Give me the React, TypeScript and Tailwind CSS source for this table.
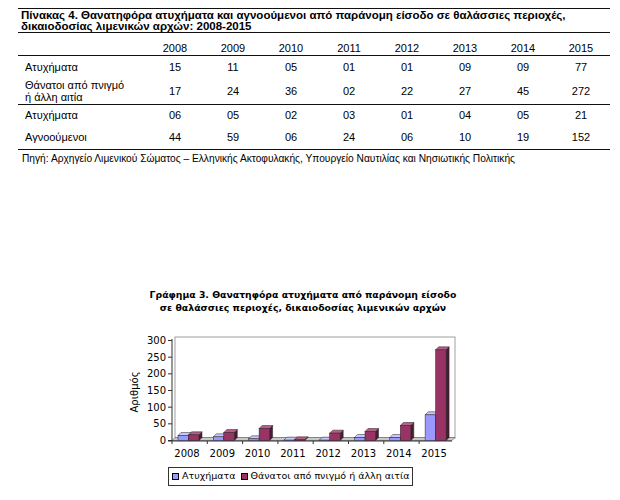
import React from "react";

const years = ["2008", "2009", "2010", "2011", "2012", "2013", "2014", "2015"];
const rows: { label: React.ReactNode; vals: string[]; h: string; border?: boolean }[] = [
  { label: "Ατυχήματα", vals: ["15", "11", "05", "01", "01", "09", "09", "77"], h: "h-[24px]" },
  {
    label: (
      <>
        Θάνατοι από πνιγμό
        <br />ή άλλη αιτία
      </>
    ),
    vals: ["17", "24", "36", "02", "22", "27", "45", "272"],
    h: "h-[25px]",
    border: true,
  },
  { label: "Ατυχήματα", vals: ["06", "05", "02", "03", "01", "04", "05", "21"], h: "h-[22px]" },
  { label: "Αγνοούμενοι", vals: ["44", "59", "06", "24", "06", "10", "19", "152"], h: "h-[23px]", border: true },
];

const blue = [15, 11, 5, 1, 1, 9, 9, 77];
const red = [17, 24, 36, 2, 22, 27, 45, 272];

function Bar({ x, v, w, front, top, side }: { x: number; v: number; w: number; front: string; top: string; side: string }) {
  const y0 = 438.5;
  const h = v / 3;
  const y = y0 - h;
  const d = 3;
  return (
    <g stroke="#222" strokeWidth={0.5}>
      <polygon points={`${x + w},${y} ${x + w + d},${y - d} ${x + w + d},${y0 - d} ${x + w},${y0}`} fill={side} />
      <polygon points={`${x},${y} ${x + d},${y - d} ${x + w + d},${y - d} ${x + w},${y}`} fill={top} />
      <rect x={x} y={y} width={w} height={h} fill={front} />
    </g>
  );
}

function Chart() {
  const cw = 35.3;
  const x0 = 172;
  const ticks = [0, 50, 100, 150, 200, 250, 300];
  return (
    <svg width={620} height={128} className="block">
      <g transform="translate(0,-330)" fontFamily="'DejaVu Sans', Verdana, sans-serif" fontSize={10} fill="#000">
        <rect x={175} y={335} width={280} height={101} fill="#fff" stroke="#a0a0a0" strokeWidth={1} />
        <polygon points="172,438.5 175,435.5 455,435.5 452,438.5" fill="#c8c8c8" stroke="#555" strokeWidth={0.6} />
        <line x1={172} y1={337} x2={172} y2={439} stroke="#333" strokeWidth={1} />
        {ticks.map((t) => {
          const y = 438.5 - t / 3;
          return (
            <g key={t}>
              <line x1={168} y1={y} x2={172} y2={y} stroke="#333" strokeWidth={1} />
              <text x={166} y={y + 3.5} textAnchor="end">
                {t}
              </text>
            </g>
          );
        })}
        <line x1={168} y1={439} x2={452} y2={439} stroke="#333" strokeWidth={1.2} />
        {years.map((_, i) => (
          <line key={i} x1={x0 + i * cw} y1={439} x2={x0 + i * cw} y2={442} stroke="#333" strokeWidth={1} />
        ))}
        {years.map((yr, i) => {
          const s = x0 + i * cw;
          return (
            <g key={yr}>
              <Bar x={s + 6} v={blue[i]} w={10.5} front="#9999ff" top="#c8c8ff" side="#6666bb" />
              <Bar x={s + 16.5} v={red[i]} w={10.5} front="#993366" top="#b85c88" side="#4d1a33" />
              <text x={s + 15} y={455} textAnchor="middle">
                {yr}
              </text>
            </g>
          );
        })}
        <text x={138} y={390} textAnchor="middle" transform="rotate(-90 138 390)">
          Αριθμός
        </text>
      </g>
    </svg>
  );
}

export default function App() {
  return (
    <div className="w-[620px] h-[500px] bg-white text-black" style={{ fontFamily: "'Liberation Sans', Arial, sans-serif" }}>
      <div className="pl-[18px] pt-[8px]">
        <div className="w-[592px]">
          <div className="border-t border-b border-[#111] pl-[3px] pt-[1px] pb-0 text-[11.5px] font-bold leading-[11px]">
            Πίνακας 4. Θανατηφόρα ατυχήματα και αγνοούμενοι από παράνομη είσοδο σε θαλάσσιες περιοχές,
            <br />
            δικαιοδοσίας λιμενικών αρχών: 2008-2015
          </div>
          <table className="w-full table-fixed border-collapse text-[11px] leading-[12px]">
            <colgroup>
              <col className="w-[128px]" />
              {years.map((y) => (
                <col key={y} className="w-[58px]" />
              ))}
            </colgroup>
            <thead>
              <tr className="h-[22px] border-b border-[#111]">
                <th />
                {years.map((y) => (
                  <th key={y} className="font-normal text-center align-bottom pb-[1px]">
                    {y}
                  </th>
                ))}
              </tr>
            </thead>
            <tbody>
              {rows.map((r, i) => (
                <tr key={i} className={`${r.h} ${r.border ? "border-b border-[#111]" : ""}`}>
                  <td className="pl-[7px] align-middle">{r.label}</td>
                  {r.vals.map((v, j) => (
                    <td key={j} className="text-center align-middle">
                      {v}
                    </td>
                  ))}
                </tr>
              ))}
            </tbody>
          </table>
          <div className="pl-[4px] pt-[3px] text-[10.2px] leading-[12px]">
            Πηγή: Αρχηγείο Λιμενικού Σώματος – Ελληνικής Ακτοφυλακής, Υπουργείο Ναυτιλίας και Νησιωτικής Πολιτικής
          </div>
        </div>
      </div>
      <div
        className="mt-[123px] pr-[14px] text-center text-[9.3px] font-bold leading-[13px]"
        style={{ fontFamily: "'DejaVu Sans', Verdana, sans-serif" }}
      >
        Γράφημα 3. Θανατηφόρα ατυχήματα από παράνομη είσοδο
        <br />
        σε θαλάσσιες περιοχές, δικαιοδοσίας λιμενικών αρχών
      </div>
      <div className="mt-[18px]">
        <Chart />
      </div>
      <div className="pl-[168px] mt-[3px]" style={{ fontFamily: "'DejaVu Sans', Verdana, sans-serif" }}>
        <div className="inline-flex items-center h-[19px] border border-[#333] px-[3px] text-[9.5px] gap-[3px]">
          <span className="w-[7px] h-[7px] bg-[#9999ff] border border-black" />
          <span>Ατυχήματα</span>
          <span className="w-[7px] h-[7px] bg-[#993366] border border-black ml-[2px]" />
          <span>Θάνατοι από πνιγμό ή άλλη αιτία</span>
        </div>
      </div>
    </div>
  );
}
